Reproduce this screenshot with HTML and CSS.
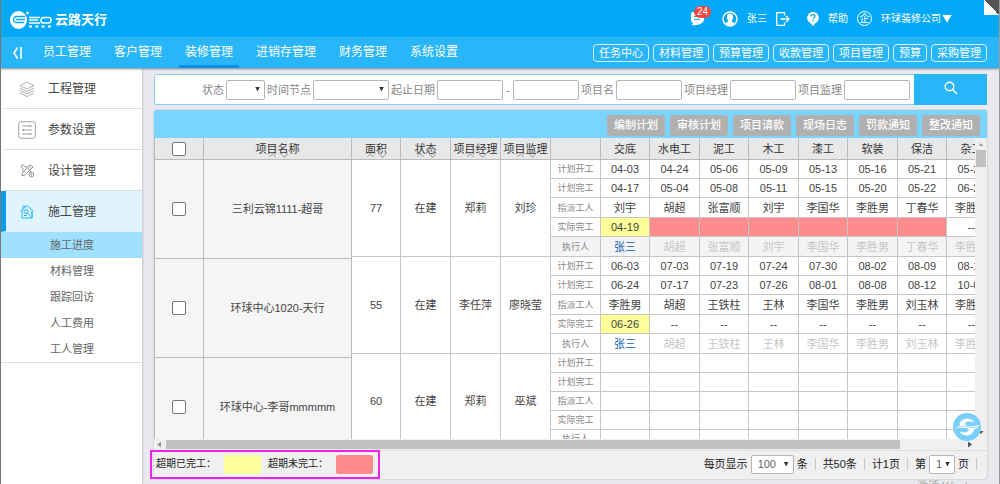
FILE: index.html
```html
<!DOCTYPE html>
<html lang="zh-CN">
<head>
<meta charset="utf-8">
<title>云路天行 - 施工进度</title>
<link rel="stylesheet" href="styles.css">
</head>
<body>
<div class="app">
  <header class="topbar">
    <a class="brand" href="#">
      <svg class="brand-mark" width="44" height="20" viewBox="0 0 44 20" fill="none" stroke="#fff">
        <ellipse cx="8.500" cy="10" rx="8.500" ry="9" fill="#fff" stroke="none"/>
        <path d="M15 6.500H7Q3.500 6.500 3.500 9.500T7 12.500H14M6 9.500H15" stroke="#03a9f6" stroke-width="1.300"/>
        <circle cx="17.500" cy="3" r="1.300" fill="#fff" stroke="none"/>
        <path d="M19 7.500H30M19 10H28M19 13H30M33 7.500H39Q41 7.500 41 10T39 13H33Q31 13 31 10.500T33 7.500" stroke-width="1.500"/>
        <path d="M19 16.500H42" stroke-width="2" stroke-dasharray="3 3.300"/>
      </svg>
      <span class="brand-name">云路天行</span>
    </a>
    <div class="account">
      <a class="messages" href="#" aria-label="消息">
        <svg width="14" height="14" viewBox="0 0 14 14"><path d="M2 0H12Q13 0 13 1V8Q12 13 1 13.500L2 11Q0 10 0 8V2Q0 0 2 0Z" fill="#fff"/><path d="M3 4.500H7M3 7.500H9" stroke="#03a9f6" stroke-width="1.200"/></svg>
        <span class="badge">24</span>
      </a>
      <div class="account-group">
        <svg width="16" height="16" viewBox="0 0 16 16"><circle cx="8" cy="8" r="7" fill="none" stroke="#fff" stroke-width="1.400"/><path d="M8 2.500C5 2.500 4.500 5 5 7C5.300 8.500 6.300 9 6.200 10.500L3 12.500Q8 16.500 13 12.500L9.800 10.500C9.700 9 10.700 8.500 11 7C11.500 5 11 2.500 8 2.500Z" fill="#fff"/></svg>
        <span>张三</span>
        <a href="#" aria-label="退出"><svg width="14" height="14" viewBox="0 0 14 14" fill="none" stroke="#fff" stroke-width="1.300"><path d="M8.500 3.500V.7H.7V13.300H8.500V10.500M4.500 7H13M10 4L13 7L10 10"/></svg></a>
      </div>
      <div class="account-group">
        <svg width="12" height="14" viewBox="0 0 12 14"><path d="M6 0A5.800 5.800 0 0 1 8.500 11L6 14L3.500 11A5.800 5.800 0 0 1 6 0Z" fill="#fff"/><path d="M4 4.500Q4 2.700 6 2.700T8 4.500Q8 5.500 6.700 6Q6 6.400 6 7.500M6 8.300V9.500" fill="none" stroke="#03a9f6" stroke-width="1.200"/></svg>
        <a href="#">帮助</a>
        <span class="company-icon">企</span>
        <a class="company" href="#">环球装修公司<i class="caret"></i></a>
      </div>
    </div>
    <i class="corner"></i>
  </header>

  <nav class="navbar">
    <button class="collapse" aria-label="收起菜单"><svg width="10" height="12" viewBox="0 0 10 12" fill="none" stroke="#fff" stroke-width="1.600"><path d="M5.500 .5L2 6L5.500 11.500M9 0V12"/></svg></button>
    <div class="menu">
      <a href="#">员工管理</a>
      <a href="#">客户管理</a>
      <a class="current" href="#">装修管理</a>
      <a href="#">进销存管理</a>
      <a href="#">财务管理</a>
      <a href="#">系统设置</a>
    </div>
    <div class="shortcuts">
      <button>任务中心</button>
      <button>材料管理</button>
      <button>预算管理</button>
      <button>收款管理</button>
      <button>项目管理</button>
      <button>预算</button>
      <button>采购管理</button>
    </div>
  </nav>

  <div class="body">
    <aside class="sidebar">
      <a class="side-item" href="#">
        <svg width="16" height="16" viewBox="0 0 16 16" fill="none" stroke="#999" stroke-width=".8"><path d="M8 1L15 4.500L8 8L1 4.500ZM1 7L8 10.500L15 7M1 9.500L8 13L15 9.500M1 12L8 15.500L15 12"/></svg>
        <span>工程管理</span>
      </a>
      <a class="side-item" href="#">
        <svg width="18" height="18" viewBox="0 0 18 18" fill="none" stroke="#999" stroke-width=".9"><rect x=".7" y=".7" width="16.600" height="16.600" rx="2.500"/><path d="M4 5H14M4 9H14M4 13H14M12 4V6M5.500 8V10M12 12V14"/></svg>
        <span>参数设置</span>
      </a>
      <a class="side-item" href="#">
        <svg width="15" height="15" viewBox="0 0 15 15" fill="none" stroke="#888" stroke-width=".9"><path d="M1 3L3 1.500L5 4L6.500 3.500L12 10M1 3L3 5.500L2.500 7L5 9.500M10 1.500L13 4L5 12L2 13L2.500 10ZM9 3L11.500 5.500"/><circle cx="11.500" cy="11.500" r="2.300"/><circle cx="11.500" cy="11.500" r=".6"/></svg>
        <span>设计管理</span>
      </a>
      <a class="side-item active" href="#">
        <svg width="14" height="15" viewBox="0 0 14 15" fill="none" stroke="#29b6f8" stroke-width="1"><path d="M.7 7L7 1.500L13.300 7M2 6V14H12V6M3 4.500V2H4.500V3M12 8V14"/><circle cx="6" cy="7.500" r="2"/><path d="M7.300 9L10.500 12.500M4 11.500H7"/></svg>
        <span>施工管理</span>
      </a>
      <div class="submenu">
        <a class="selected" href="#">施工进度</a>
        <a href="#">材料管理</a>
        <a href="#">跟踪回访</a>
        <a href="#">人工费用</a>
        <a href="#">工人管理</a>
      </div>
    </aside>

    <main class="content">
      <form class="search">
        <div class="fields">
          <label for="f-status">状态</label>
          <span class="select w-status"><select id="f-status"><option></option></select></span>
          <label for="f-node">时间节点</label>
          <span class="select w-node"><select id="f-node"><option></option></select></span>
          <label for="f-from">起止日期</label>
          <input id="f-from" type="text">
          <span class="dash">-</span>
          <input type="text" aria-label="截止日期">
          <label for="f-name">项目名</label>
          <input id="f-name" type="text">
          <label for="f-manager">项目经理</label>
          <input id="f-manager" type="text">
          <label for="f-super">项目监理</label>
          <input id="f-super" type="text">
        </div>
        <button class="search-btn" type="button" aria-label="搜索"><svg width="14" height="14" viewBox="0 0 14 14" fill="none" stroke="#fff" stroke-width="1.500"><circle cx="5.500" cy="5.500" r="4.300"/><path d="M8.700 8.700L13 13"/></svg></button>
      </form>

      <section class="panel">
        <div class="toolbar">
          <button>编制计划</button>
          <button>审核计划</button>
          <button>项目请款</button>
          <button>现场日志</button>
          <button>罚款通知</button>
          <button>整改通知</button>
        </div>

        <div class="grid">
          <div class="frozen">
            <table>
              <colgroup><col class="c-check"><col class="c-name"></colgroup>
              <thead><tr><th><input type="checkbox" aria-label="全选"></th><th class="sortable">项目名称</th></tr></thead>
              <tbody>
                <tr><td><input type="checkbox" aria-label="选择三利云锦1111-超哥"></td><td>三利云锦1111-超哥</td></tr>
                <tr><td><input type="checkbox" aria-label="选择环球中心1020-天行"></td><td>环球中心1020-天行</td></tr>
                <tr><td><input type="checkbox" aria-label="选择环球中心-李哥mmmmm"></td><td>环球中心-李哥mmmmm</td></tr>
              </tbody>
            </table>
          </div>
          <div class="scroller">
            <table>
              <colgroup><col class="c-a"><col class="c-b"><col class="c-b"><col class="c-b"><col class="c-b"><col class="c-a"><col class="c-b"><col class="c-a"><col class="c-b"><col class="c-a"><col class="c-b"><col class="c-a"><col class="c-b"></colgroup>
              <thead>
                <tr><th class="sortable">面积</th><th class="sortable">状态</th><th class="sortable">项目经理</th><th class="sortable">项目监理</th><th></th><th>交底</th><th>水电工</th><th>泥工</th><th>木工</th><th>漆工</th><th>软装</th><th>保洁</th><th>杂工</th></tr>
              </thead>
              <tbody>
                <tr><td rowspan="5">77</td><td rowspan="5">在建</td><td rowspan="5">郑莉</td><td rowspan="5">刘珍</td><th>计划开工</th><td>04-03</td><td>04-24</td><td>05-06</td><td>05-09</td><td>05-13</td><td>05-16</td><td>05-21</td><td>05-25</td></tr>
                <tr><th>计划完工</th><td>04-17</td><td>05-04</td><td>05-08</td><td>05-11</td><td>05-15</td><td>05-20</td><td>05-22</td><td>06-20</td></tr>
                <tr class="tall"><th>指派工人</th><td>刘宇</td><td>胡超</td><td>张富顺</td><td>刘宇</td><td>李国华</td><td>李胜男</td><td>丁春华</td><td>李胜男</td></tr>
                <tr><th>实际完工</th><td class="late-done">04-19</td><td class="late-open"></td><td class="late-open"></td><td class="late-open"></td><td class="late-open"></td><td class="late-open"></td><td class="late-open"></td><td>--</td></tr>
                <tr class="tall executor shaded"><th>执行人</th><td><a href="#">张三</a></td><td>胡超</td><td>张富顺</td><td>刘宇</td><td>李国华</td><td>李胜男</td><td>丁春华</td><td>李胜男</td></tr>
              </tbody>
              <tbody>
                <tr><td rowspan="5">55</td><td rowspan="5">在建</td><td rowspan="5">李任萍</td><td rowspan="5">廖晓莹</td><th>计划开工</th><td>06-03</td><td>07-03</td><td>07-19</td><td>07-24</td><td>07-30</td><td>08-02</td><td>08-09</td><td>08-10</td></tr>
                <tr><th>计划完工</th><td>06-24</td><td>07-17</td><td>07-23</td><td>07-26</td><td>08-01</td><td>08-08</td><td>08-12</td><td>10-01</td></tr>
                <tr class="tall"><th>指派工人</th><td>李胜男</td><td>胡超</td><td>王铁柱</td><td>王林</td><td>李国华</td><td>李胜男</td><td>刘玉林</td><td>李胜男</td></tr>
                <tr><th>实际完工</th><td class="late-done">06-26</td><td>--</td><td>--</td><td>--</td><td>--</td><td>--</td><td>--</td><td>--</td></tr>
                <tr class="tall executor"><th>执行人</th><td><a href="#">张三</a></td><td>胡超</td><td>王铁柱</td><td>王林</td><td>李国华</td><td>李胜男</td><td>刘玉林</td><td>李胜男</td></tr>
              </tbody>
              <tbody>
                <tr><td rowspan="5">60</td><td rowspan="5">在建</td><td rowspan="5">郑莉</td><td rowspan="5">巫斌</td><th>计划开工</th><td></td><td></td><td></td><td></td><td></td><td></td><td></td><td></td></tr>
                <tr><th>计划完工</th><td></td><td></td><td></td><td></td><td></td><td></td><td></td><td></td></tr>
                <tr><th>指派工人</th><td></td><td></td><td></td><td></td><td></td><td></td><td></td><td></td></tr>
                <tr><th>实际完工</th><td></td><td></td><td></td><td></td><td></td><td></td><td></td><td></td></tr>
                <tr><th>执行人</th><td></td><td></td><td></td><td></td><td></td><td></td><td></td><td></td></tr>
              </tbody>
            </table>
          </div>
          <div class="vbar"><i class="arrow up"></i><i class="thumb"></i><i class="arrow down"></i></div>
          <button class="float-btn" aria-label="刷新"><svg width="28" height="28" viewBox="0 0 28 28"><circle cx="14" cy="14" r="14" fill="#79cffa"/><path d="M6.500 10.500Q9 5.500 14.500 5.500Q19.500 6 21.500 9.500Q16 7.500 12.500 9.500Q11 11.500 14 12.500Q19 14 27 12Q25 15.500 21 16.500Q20 21.500 14.500 22.500Q9 22.500 6.500 18.500Q12 20.500 15.500 18Q17 16 13.500 15Q8 14 1.500 16Q3 13.500 7 12.500Z" fill="#fff"/><path d="M3 15Q10 11.500 15 13.500T26 14" fill="none" stroke="#79cffa" stroke-width=".8"/></svg></button>
        </div>
        <div class="hbar"><i class="arrow left"></i><i class="thumb"></i><i class="arrow right"></i></div>

        <footer class="footer">
          <div class="legend">
            <span>超期已完工：</span><i class="swatch late-done"></i>
            <span>超期未完工：</span><i class="swatch late-open"></i>
          </div>
          <div class="pager">
            <label for="p-size">每页显示</label>
            <span class="select w-size"><select id="p-size"><option>100</option></select></span>
            <span>条</span>
            <span class="sep"></span><span>共50条</span>
            <span class="sep"></span><span>计1页</span>
            <span class="sep"></span><label for="p-page">第</label>
            <span class="select w-page"><select id="p-page"><option>1</option></select></span>
            <span>页</span><span class="sep"></span>
          </div>
        </footer>
      </section>
      <div class="watermark">激活 Windows</div>
    </main>
  </div>
</div>
</body>
</html>
```
FILE: styles.css
```css
* { box-sizing: border-box; }

body {
  margin: 0;
  font: 11px/16px "Liberation Sans", "Noto Sans CJK SC", sans-serif;
  color: #444;
  background: #e9eaee;
}

a { color: inherit; text-decoration: none; }

button, input, select {
  margin: 0;
  font: inherit;
  color: inherit;
}

button {
  padding: 0;
  border: 0;
  background: none;
  cursor: pointer;
}

svg { display: block; flex: none; }

.app {
  display: flex;
  flex-direction: column;
  height: 100vh;
  overflow: hidden;
  border-left: 1px solid #777;
  border-right: 1px solid #999;
}

/* top bar */
.topbar {
  position: relative;
  display: flex;
  justify-content: space-between;
  align-items: center;
  flex: none;
  height: 37px;
  padding: 0 47px 0 9px;
  color: #fff;
  background: #03a9f6;
}

.brand { display: flex; align-items: center; gap: 1px; padding-top: 2px; }
.brand-name { font-size: 13px; font-weight: bold; line-height: 20px; }

.account {
  display: flex;
  align-items: center;
  gap: 17px;
  font-size: 10px;
}

.account-group { display: flex; align-items: center; gap: 9px; }
.messages { position: relative; }

.badge {
  position: absolute;
  left: 3px;
  top: -6px;
  width: 17px;
  border-radius: 6px;
  line-height: 12px;
  text-align: center;
  background: #f8463f;
}

.company-icon {
  width: 15px;
  height: 15px;
  border: 1px solid #fff;
  border-radius: 50%;
  line-height: 13px;
  text-align: center;
}

.company { display: flex; align-items: center; gap: 1px; }

.caret {
  width: 10px;
  height: 8px;
  background: #fff;
  clip-path: polygon(0 0, 100% 0, 50% 100%);
}

.corner {
  position: absolute;
  right: 0;
  top: 0;
  width: 15px;
  height: 15px;
  background: linear-gradient(to top right, #fff 50%, #555 50%);
}

/* main navigation */
.navbar {
  position: relative;
  display: flex;
  align-items: stretch;
  flex: none;
  height: 31px;
  padding: 0 12px 0 11px;
  color: #fff;
  background: #29b6f8;
  box-shadow: 0 1px 2px #6b8794;
}

.collapse { align-self: center; }
.menu { display: flex; flex: 1; gap: 11px; margin-left: 15px; }

.menu a {
  padding: 0 6px;
  border-bottom: 3px solid transparent;
  font-size: 12px;
  line-height: 30px;
}

.menu .current { border-color: #0a8fe8; }
.shortcuts { display: flex; align-items: center; gap: 4px; }

.shortcuts button {
  padding: 0 5px;
  border: 1px solid #d4f0fd;
  border-radius: 4px;
}

/* sidebar */
.body { display: flex; flex: 1; min-height: 0; }

.sidebar {
  flex: none;
  width: 141px;
  background: #fff;
  box-shadow: 1px 0 2px #c4c6cb;
}

.side-item {
  display: grid;
  grid-template-columns: 42px 1fr;
  align-items: center;
  height: 41px;
  padding-top: 1px;
  border-bottom: 1px solid #ddd;
  border-left: 5px solid transparent;
  background: #fff padding-box;
  font-size: 12px;
}

.side-item svg { justify-self: center; }
.side-item.active { border-color: #e0f4fe; border-left-color: #0b9be8; background: #e0f4fe; }
.submenu { border-bottom: 1px solid #ddd; }

.submenu a {
  display: block;
  padding: 1px 0 0 49px;
  line-height: 25px;
  color: #666;
}

.submenu .selected { background: #9fe1ff; }

/* content */
.content {
  display: flex;
  flex-direction: column;
  flex: 1;
  min-width: 0;
  padding: 6px 12px 0;
}

.search {
  display: flex;
  flex: none;
  height: 31px;
  margin-bottom: 5px;
  border: 1px solid #8ecbec;
  border-radius: 2px;
  background: #fff;
}

.fields {
  display: flex;
  flex: 1;
  justify-content: flex-end;
  align-items: center;
  gap: 2px;
  padding-right: 5px;
  color: #888;
}

.fields input, .select select {
  width: 66px;
  height: 20px;
  padding: 0;
  border: 1px solid #b5b5b5;
  border-radius: 2px;
  background: #fff;
}

.dash { width: 6px; text-align: center; }
.select { position: relative; display: flex; }
.select select { width: 100%; appearance: none; }

.select::after {
  content: "";
  position: absolute;
  right: 5px;
  top: 7px;
  width: 5px;
  height: 5px;
  background: #333;
  clip-path: polygon(0 0, 100% 0, 50% 100%);
  pointer-events: none;
}

.w-status { width: 39px; }
.w-node { width: 76px; }
.w-size { width: 43px; }
.w-page { width: 26px; }

.search-btn {
  display: flex;
  justify-content: center;
  width: 73px;
  margin: -1px;
  padding-top: 7px;
  background: #29b6f8;
}

.panel {
  display: flex;
  flex-direction: column;
  flex: 1;
  min-height: 0;
  border-radius: 3px;
  background: #f0f0f0;
  box-shadow: 0 0 2px #aaa;
}

.toolbar {
  display: flex;
  justify-content: flex-end;
  align-items: center;
  flex: none;
  gap: 5px;
  height: 28px;
  padding: 2px 7px 0 0;
  border-radius: 3px 3px 0 0;
  background: #79d5ff;
}

.toolbar button {
  padding: 0 7px;
  border-radius: 2px;
  line-height: 21px;
  font-weight: 500;
  color: #fff;
  background: #b0b0b0;
}

/* schedule grid */
.grid { position: relative; display: flex; flex: 1; min-height: 0; background: #fff; }
.frozen { flex: none; overflow: hidden; }
.scroller { flex: 1; overflow: hidden; }

table {
  table-layout: fixed;
  width: 0;
  border-collapse: separate;
  border-spacing: 0;
}

.c-check { width: 50px; }
.c-name { width: 148px; }
.c-a { width: 49px; }
.c-b { width: 50px; }

th, td {
  height: 19px;
  padding: 0;
  border: solid #c6c6c6;
  border-width: 0 1px 1px 0;
  line-height: 16px;
  font-weight: normal;
  text-align: center;
  white-space: nowrap;
  overflow: hidden;
}

thead th {
  position: relative;
  height: 22px;
  border-color: #bbb;
  color: #333;
  background: #e8e8e8;
}

tbody th { font-size: 9px; color: #888; }
.tall > * { height: 20px; }
.frozen td { height: 99px; border-color: #bbb; background: #f5f5f5; }
.frozen th:first-child, .frozen td:first-child { border-left-width: 1px; }

.sortable::before, .sortable::after {
  content: "";
  position: absolute;
  bottom: 2px;
  left: calc(50% - 8px);
  width: 4px;
  height: 4px;
  border: solid #aaa;
  border-width: 1px 0 0 1px;
  transform: rotate(45deg);
}

.sortable::before { bottom: 0; }
.sortable::after { left: calc(50% + 4px); transform: rotate(225deg); }

input[type="checkbox"] {
  display: block;
  width: 14px;
  height: 14px;
  margin: 0 auto;
  border: 1px solid #777;
  border-radius: 2px;
  background: #fff;
  appearance: none;
}

input[type="checkbox"]:checked { background: #29b6f8; }

.late-done { background: #ffff99; }
.late-open { background: #ff8c8c; }
.executor td { color: #c6c6c6; }
.executor a { color: #0a62b0; }
.shaded th, .shaded td { background: #f4f4f4; }

.vbar, .hbar { display: flex; align-items: center; flex: none; background: #f0f0f0; }
.vbar { flex-direction: column; width: 12px; padding: 5px 1px; }
.hbar { height: 11px; padding: 0 15px 0 3px; }
.thumb { background: #c1c1c1; }
.vbar .thumb { width: 10px; height: 17px; margin: 4px 0 auto; }
.hbar .thumb { width: 90%; height: 9px; margin: 0 auto 0 5px; }
.arrow { flex: none; width: 5px; height: 3px; background: #555; }
.up { background: #aaa; clip-path: polygon(50% 0, 100% 100%, 0 100%); }
.down { clip-path: polygon(0 0, 100% 0, 50% 100%); }
.left, .right { width: 4px; height: 6px; }
.left { background: #999; clip-path: polygon(100% 0, 100% 100%, 0 50%); }
.right { clip-path: polygon(0 0, 100% 50%, 0 100%); }

.float-btn { position: absolute; right: 6px; bottom: -2px; }

/* footer */
.footer {
  display: flex;
  justify-content: space-between;
  align-items: center;
  flex: none;
  height: 29px;
  padding-bottom: 2px;
  border-top: 1px solid #ddd;
  color: #222;
}

.legend {
  position: relative;
  display: flex;
  align-items: center;
  padding: 0 7px 0 2px;
  font-size: 10px;
}

.legend::after {
  content: "";
  position: absolute;
  inset: -5px 0 -5px -4px;
  border: 2px solid #ee22ee;
  pointer-events: none;
}

.swatch { width: 37px; height: 19px; margin: 0 7px 0 8px; border-radius: 2px; }
.swatch:last-child { margin-right: 0; }

.pager { display: flex; align-items: center; gap: 3px; padding-right: 6px; }
.pager select { height: 19px; padding-left: 6px; color: #666; }
.sep { width: 1px; height: 12px; margin: 0 4px; background: #ccc; }

.watermark {
  flex: none;
  height: 5px;
  overflow: hidden;
  line-height: 14px;
  text-align: right;
  color: #aaa;
}
```
